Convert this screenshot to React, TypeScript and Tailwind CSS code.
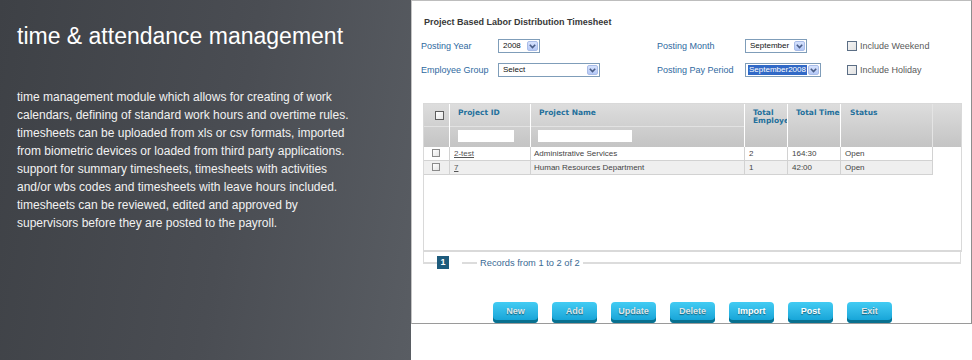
import React from 'react';

const rows = [
  { id: '2-test', name: 'Administrative Services', emp: '2', time: '164:30', status: 'Open' },
  { id: '7', name: 'Human Resources Department', emp: '1', time: '42:00', status: 'Open' },
];

const buttons = [
  { label: 'New', on: false },
  { label: 'Add', on: false },
  { label: 'Update', on: false },
  { label: 'Delete', on: false },
  { label: 'Import', on: true },
  { label: 'Post', on: true },
  { label: 'Exit', on: false },
];

function Arrow() {
  return (
    <span className="flex h-[10px] w-[11px] items-center justify-center rounded-[2px] bg-gradient-to-b from-[#d6e2fd] to-[#b4c8f6] border border-[#a9bce8]">
      <svg width="7" height="5" viewBox="0 0 7 5">
        <path d="M0.8 0.8 L3.5 3.6 L6.2 0.8" fill="none" stroke="#4a5d86" strokeWidth="1.6" />
      </svg>
    </span>
  );
}

function Select({ w, text, hi }: { w: string; text: string; hi?: boolean }) {
  return (
    <div className={`${w} flex h-[14px] items-center justify-between border border-[#7f9db9] bg-white pl-[2px] pr-[1px]`}>
      <span
        className={
          hi
            ? 'bg-[#3169c6] px-[1px] text-[8px] leading-[10px] text-white'
            : 'pl-[2px] text-[8px] leading-[10px] text-[#111]'
        }
      >
        {text}
      </span>
      <Arrow />
    </div>
  );
}

function Check() {
  return <span className="block h-[10px] w-[10px] border border-[#5b6e85] bg-gradient-to-br from-[#f4f4f4] to-[#e2e2e2]" />;
}

export default function App() {
  return (
    <div className="flex h-[360px] w-[972px] bg-white font-['Liberation_Sans',Arial,sans-serif]">
      <div className="h-[360px] w-[411px] bg-[linear-gradient(100deg,#3e4146_0%,#4a4d53_55%,#595d63_100%)] pl-[17px] pt-[25px] text-white">
        <h1 className="text-[23px] leading-[23px] font-normal">time &amp; attendance management</h1>
        <p className="mt-[40px] w-[342px] text-[12px] leading-[18px] text-[#f2f2f2]">
          time management module which allows for creating of work calendars, defining of standard work hours and
          overtime rules. timesheets can be uploaded from xls or csv formats, imported from biometric devices or
          loaded from third party applications. support for summary timesheets, timesheets with activities and/or wbs
          codes and timesheets with leave hours included. timesheets can be reviewed, edited and approved by
          supervisors before they are posted to the payroll.
        </p>
      </div>

      <div className="flex h-[324px] w-[561px] flex-col border border-l-[#c4c4c4] border-t-[#bdbdbd] border-r-[#8e8e8e] border-b-[#9a9a9a]">
        <div className="mt-[15px] pl-[12px] text-[9px] leading-[12px] font-bold text-[#383838]">
          Project Based Labor Distribution Timesheet
        </div>

        <div className="mt-[11px] grid grid-cols-[77px_159px_88px_102px_13px_auto] grid-rows-[14px_14px] items-center gap-y-[10px] pl-[9px] text-[9px] leading-[12px]">
          <span className="text-[#2f6a9f]">Posting Year</span>
          <Select w="w-[42px]" text="2008" />
          <span className="text-[#2f6a9f]">Posting Month</span>
          <Select w="w-[62px]" text="September" />
          <Check />
          <span className="text-[#5a5a5a]">Include Weekend</span>

          <span className="text-[#2f6a9f]">Employee Group</span>
          <Select w="w-[102px]" text="Select" />
          <span className="text-[#2f6a9f]">Posting Pay Period</span>
          <Select w="w-[76px]" text="September2008" hi />
          <Check />
          <span className="text-[#5a5a5a]">Include Holiday</span>
        </div>

        <div className="ml-[11px] mt-[26px] h-[149px] w-[539px] border border-b-2 border-[#d9d9d9]">
          <div className="flex h-[43px] bg-gradient-to-b from-[#dddddd] to-[#c4c4c4] font-['DejaVu_Sans',Verdana,sans-serif] text-[7.5px] leading-[8px] font-bold text-[#24709c]">
            <div className="flex w-[25px] flex-col">
              <div className="h-[22px] pl-[11px] pt-[7px]">
                <span className="block h-[9px] w-[9px] border border-[#5e5e5e] bg-gradient-to-br from-white to-[#e6e6e6]" />
              </div>
              <div className="flex-1 border-t border-[#e2e2e2]" />
            </div>
            <div className="flex w-[81px] flex-col border-l border-white">
              <div className="h-[22px] pl-[8px] pt-[5px]">Project ID</div>
              <div className="flex-1 border-t border-[#e2e2e2] pl-[8px] pt-[3px]">
                <div className="h-[12px] w-[56px] bg-white" />
              </div>
            </div>
            <div className="flex w-[214px] flex-col border-l border-white">
              <div className="h-[22px] pl-[8px] pt-[5px]">Project Name</div>
              <div className="flex-1 border-t border-[#e2e2e2] pl-[7px] pt-[3px]">
                <div className="h-[12px] w-[94px] bg-white" />
              </div>
            </div>
            <div className="w-[43px] overflow-hidden border-l border-white pl-[8px] pt-[5px]">
              <div className="w-[60px]">Total</div>
              <div className="w-[60px]">Employees</div>
            </div>
            <div className="w-[53px] border-l border-white pl-[8px] pt-[5px] whitespace-nowrap">Total Time</div>
            <div className="w-[92px] border-l border-white pl-[9px] pt-[5px]">Status</div>
            <div className="flex-1 border-l border-[#e4e4e4]" />
          </div>

          {rows.map((r, i) => (
            <div
              key={r.id}
              className={`flex h-[14px] w-[509px] border-b border-r border-[#d2d2d2] text-[8px] leading-[13px] text-[#444] ${
                i === 1 ? 'bg-[#efefef]' : 'bg-white'
              }`}
            >
              <div className="w-[25px] pl-[8px] pt-[2px]">
                <span className="block h-[8px] w-[8px] border border-[#8a8a8a] bg-gradient-to-br from-white to-[#e4e4e4]" />
              </div>
              <div className="w-[81px] border-l border-[#d2d2d2] pl-[4px] text-[#555] underline">{r.id}</div>
              <div className="w-[214px] border-l border-[#d2d2d2] pl-[3px] text-[#444]">{r.name}</div>
              <div className="w-[43px] border-l border-[#d2d2d2] pl-[4px] text-[#444]">{r.emp}</div>
              <div className="w-[53px] border-l border-[#d2d2d2] pl-[4px] text-[#444]">{r.time}</div>
              <div className="flex-1 border-l border-[#d2d2d2] pl-[4px] text-[#444]">{r.status}</div>
            </div>
          ))}
        </div>

        <div className="ml-[11px] flex h-[18px] w-[538px] items-start">
          <div className="h-[12px] w-[14px] border-b-2 border-l border-[#dcdcdc]" />
          <div className="mt-[4px] flex h-[13px] w-[12px] items-center justify-center bg-[#1d5b7c] text-[9px] font-bold text-white">
            1
          </div>
          <div className="w-[13px]" />
          <div className="h-[12px] w-[15px] border-b-2 border-[#dcdcdc]" />
          <div className="mt-[6px] px-[3px] text-[9.3px] leading-[11px] text-[#3a6a94]">Records from 1 to 2 of 2</div>
          <div className="h-[12px] flex-1 border-b-2 border-r border-[#dcdcdc]" />
        </div>

        <div className="mt-auto flex gap-[14px] pl-[81px]">
          {buttons.map((b) => (
            <div
              key={b.label}
              className={`flex h-[21px] w-[45px] items-center justify-center rounded-[4px] bg-gradient-to-b from-[#42ccf3] to-[#0a9fd4] pb-[2px] text-[9px] font-bold shadow-[inset_0_-3px_0_#08708f] [text-shadow:0_1px_1px_rgba(0,0,0,0.45)] ${
                b.on ? 'text-white' : 'text-[#dfe4e7]'
              }`}
            >
              {b.label}
            </div>
          ))}
        </div>
      </div>
    </div>
  );
}
